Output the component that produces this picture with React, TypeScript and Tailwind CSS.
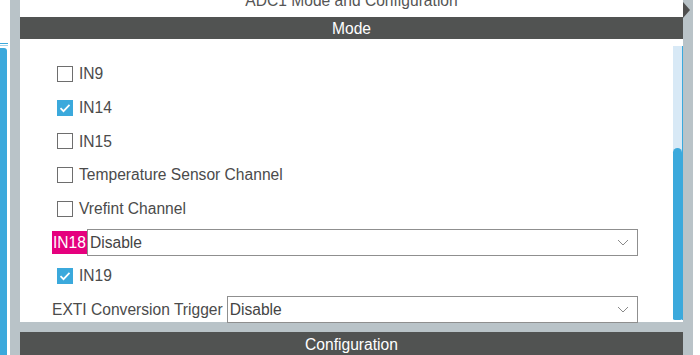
import React from 'react'

type Row =
  | { kind: 'check'; label: string; checked: boolean }
  | { kind: 'select'; label: string; value: string; tag?: boolean }

const rows: Row[] = [
  { kind: 'check', label: 'IN9', checked: false },
  { kind: 'check', label: 'IN14', checked: true },
  { kind: 'check', label: 'IN15', checked: false },
  { kind: 'check', label: 'Temperature Sensor Channel', checked: false },
  { kind: 'check', label: 'Vrefint Channel', checked: false },
  { kind: 'select', label: 'IN18', value: 'Disable', tag: true },
  { kind: 'check', label: 'IN19', checked: true },
  { kind: 'select', label: 'EXTI Conversion Trigger', value: 'Disable' },
]

function Checkbox({ checked }: { checked: boolean }) {
  if (checked)
    return (
      <span className="w-[16px] h-[16px] bg-[#3ba9dc] flex items-center justify-center shrink-0">
        <svg width="16" height="16" viewBox="0 0 16 16">
          <polyline points="3.5,8.2 6.5,11.2 12.5,4.8" fill="none" stroke="white" strokeWidth="1.7" />
        </svg>
      </span>
    )
  return <span className="w-[16px] h-[16px] border-[1.5px] border-[#6e6e6e] bg-white shrink-0" />
}

function Select({ value }: { value: string }) {
  return (
    <div className="flex-1 h-[27px] border border-[#8f8f8f] flex items-center justify-between pl-[2px] pr-[8px]">
      <span className="text-[15.6px] text-[#444]">{value}</span>
      <svg width="12" height="7" viewBox="0 0 12 7">
        <polyline points="1,1 6,6 11,1" fill="none" stroke="#8a8a8a" strokeWidth="1" />
      </svg>
    </div>
  )
}

export default function App() {
  return (
    <div className="w-[700px] h-[355px] bg-[#b9c3c8] flex overflow-hidden font-['Liberation_Sans',Arial,sans-serif]">
      {/* left pane edge */}
      <div className="w-[10px] h-full bg-white flex flex-col">
        <div className="h-[43px]" />
        <div className="h-[1px] w-[8px] bg-[#3ba9dc]" />
        <div className="h-[1px]" />
        <div className="h-[1px] w-[8px] bg-[#9fd2ec]" />
        <div className="h-[2px]" />
        <div className="flex-1 w-[7px] bg-[#3ba9dc] rounded-tr-[3px]" />
      </div>
      <div className="w-[10px]" />

      {/* main panel */}
      <div className="w-[663px] h-full flex flex-col">
        <div className="h-[322px] bg-white flex flex-col">
          <div className="h-[17px] overflow-hidden flex justify-center">
            <span className="-mt-[8px] leading-[17px] text-[15.6px] text-[#555]">ADC1 Mode and Configuration</span>
          </div>
          <div className="h-[22px] bg-[#515352] flex items-center justify-center text-white text-[15.6px] pt-[2px]">Mode</div>
          <div className="flex-1 flex min-h-0">
            <div className="flex-1 flex flex-col pt-[18px] pl-[32px] pr-[35px]">
              {rows.map((r) =>
                r.kind === 'check' ? (
                  <div key={r.label} className="h-[33.7px] shrink-0 flex items-center gap-[6px] pl-[5px] text-[15.6px] text-[#4b4b4b]">
                    <Checkbox checked={r.checked} />
                    <span>{r.label}</span>
                  </div>
                ) : (
                  <div key={r.label} className="h-[33.7px] shrink-0 flex items-center text-[15.6px]">
                    {r.tag ? (
                      <span className="h-[23px] bg-[#e5007e] text-white flex items-center px-[1px]">{r.label}</span>
                    ) : (
                      <span className="text-[#4b4b4b] pr-[4px]">{r.label}</span>
                    )}
                    <Select value={r.value} />
                  </div>
                )
              )}
            </div>
            {/* scrollbar */}
            <div className="w-[10px] flex flex-col pt-[7px] pb-[2px]">
              <div className="flex-1 flex flex-col bg-[#d8e9f6] border-r border-[#3ba9dc]">
                <div className="h-[102px]" />
                <div className="flex-1 bg-[#3ba9dc] rounded-t-[5px] rounded-b-[2px]" />
              </div>
            </div>
          </div>
        </div>
        <div className="h-[10px]" />
        <div className="h-[23px] bg-[#515352] flex items-center justify-center text-white text-[15.6px] pt-[2px]">Configuration</div>
      </div>

      {/* right edge */}
      <div className="w-[10px] h-full flex flex-col pt-[2px]">
        <svg width="8" height="16" viewBox="0 0 8 16">
          <polygon points="0,0 7,8 0,16" fill="#4f4f4f" />
        </svg>
      </div>
      <div className="w-[7px] h-full bg-white" />
    </div>
  )
}
